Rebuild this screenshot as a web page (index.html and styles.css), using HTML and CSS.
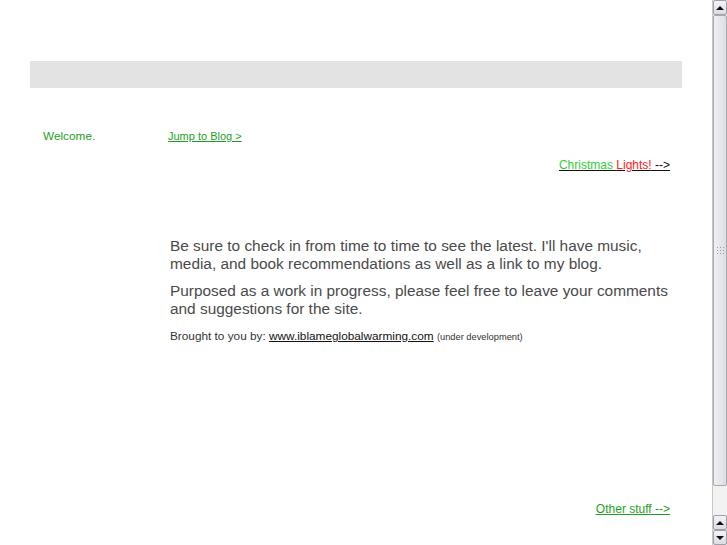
FILE: index.html
```html
<!DOCTYPE html>
<html>
<head>
<meta charset="utf-8">
<link rel="stylesheet" href="styles.css">
</head>
<body>
<div class="window">
  <div class="page">
    <div class="topbar"></div>
    <div class="nav">
      <span class="welcome">Welcome.</span>
      <a class="jump" href="#">Jump to Blog &gt;</a>
    </div>
    <div class="xmas-row">
      <a class="xmas" href="#"><span class="g">Christmas</span> <span class="r">Lights!</span> --&gt;</a>
    </div>
    <div class="content">
      <p class="big">Be sure to check in from time to time to see the latest. I'll have music, media, and book recommendations as well as a link to my blog.</p>
      <p class="big">Purposed as a work in progress, please feel free to leave your comments and suggestions for the site.</p>
      <p class="small">Brought to you by: <a class="site" href="#">www.iblameglobalwarming.com</a> <span class="tiny">(under development)</span></p>
    </div>
    <div class="other-row">
      <a class="other" href="#">Other stuff --&gt;</a>
    </div>
  </div>
  <div class="scrollbar">
    <div class="btn up"><span class="tri-up"></span></div>
    <div class="thumb"><span class="grip"></span></div>
    <div class="track"></div>
    <div class="btn up"><span class="tri-up"></span></div>
    <div class="btn down"><span class="tri-down"></span></div>
  </div>
</div>
</body>
</html>
```
FILE: styles.css
```css
html, body {
  margin: 0;
  padding: 0;
  background: #fff;
  font-family: "Liberation Sans", Arial, sans-serif;
}
.window {
  display: flex;
  width: 727px;
  height: 545px;
  overflow: hidden;
}
.page {
  flex: 1;
  display: flex;
  flex-direction: column;
}
.topbar {
  margin: 61px 0 0 30px;
  width: 652px;
  height: 27px;
  background: #e3e3e3;
}
.nav {
  display: flex;
  align-items: baseline;
  margin-top: 41px;
  padding-left: 43px;
  line-height: 14px;
}
.welcome {
  color: #1f9f1f;
  width: 125px;
  font-size: 11.8px;
}
.jump {
  color: #1f9f1f;
  font-size: 11px;
}
.xmas-row {
  margin-top: 15px;
  width: 670px;
  text-align: right;
  font-size: 12px;
  line-height: 14px;
}
.xmas {
  color: #111;
  text-decoration: underline;
}
.xmas .g { color: #33cc33; }
.xmas .r { color: #ff2020; }
.content {
  margin-top: 65px;
  padding-left: 170px;
  width: 510px;
  color: #4a4a4a;
}
.big {
  margin: 0 0 10px 0;
  font-size: 15.4px;
  line-height: 17.5px;
}
.big + .small {
  margin-top: 12px;
}
.small {
  margin: 0;
  font-size: 11.8px;
  line-height: 14px;
  color: #333;
}
.site { color: #111; }
.tiny { font-size: 9.3px; }
.other-row {
  margin-top: 158px;
  width: 670px;
  text-align: right;
  font-size: 12px;
  line-height: 14px;
}
.other { color: #1f9f1f; }
.scrollbar {
  width: 15px;
  display: flex;
  flex-direction: column;
  background: #ececec;
  border-left: 1px solid #c8c8c8;
  box-sizing: border-box;
}
.btn {
  height: 15px;
  box-sizing: border-box;
  border: 1px solid #a0a0a8;
  border-radius: 2px;
  background: linear-gradient(#f4f4f8, #dcdce2);
  display: flex;
  align-items: center;
  justify-content: center;
}
.thumb {
  flex: 1;
  box-sizing: border-box;
  border: 1px solid #a8a8b0;
  border-radius: 2px;
  background: linear-gradient(to right, #f0f0f6, #dcdce4);
  display: flex;
  align-items: center;
  justify-content: center;
}
.grip {
  width: 8px;
  height: 9px;
  background-image: radial-gradient(circle, #9a9aa0 0.8px, transparent 1px);
  background-size: 3px 3px;
}
.track {
  height: 29px;
  background: #f2f2f2;
}
.tri-up {
  width: 0; height: 0;
  border-left: 4px solid transparent;
  border-right: 4px solid transparent;
  border-bottom: 4px solid #111;
}
.tri-down {
  width: 0; height: 0;
  border-left: 4px solid transparent;
  border-right: 4px solid transparent;
  border-top: 4px solid #111;
}
```
